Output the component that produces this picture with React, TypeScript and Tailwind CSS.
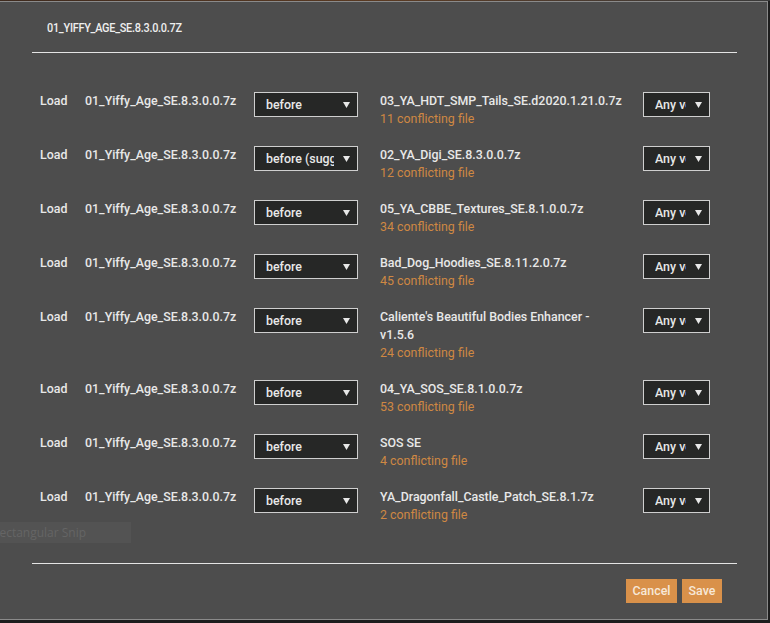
import { ReactNode } from "react";

type Row = {
  order: string;
  title: string;
  count: number;
};

const rows: Row[] = [
  { order: "before", title: "03_YA_HDT_SMP_Tails_SE.d2020.1.21.0.7z", count: 11 },
  { order: "before (suggested)", title: "02_YA_Digi_SE.8.3.0.0.7z", count: 12 },
  { order: "before", title: "05_YA_CBBE_Textures_SE.8.1.0.0.7z", count: 34 },
  { order: "before", title: "Bad_Dog_Hoodies_SE.8.11.2.0.7z", count: 45 },
  { order: "before", title: "Caliente's Beautiful Bodies Enhancer - v1.5.6", count: 24 },
  { order: "before", title: "04_YA_SOS_SE.8.1.0.0.7z", count: 53 },
  { order: "before", title: "SOS SE", count: 4 },
  { order: "before", title: "YA_Dragonfall_Castle_Patch_SE.8.1.7z", count: 2 },
];

function Caret() {
  return (
    <svg width="7" height="6" viewBox="0 0 7 6" className="shrink-0">
      <path d="M0 0 H7 L3.5 6 Z" fill="#e8e8e8" />
    </svg>
  );
}

function Select({ width, textWidth, children }: { width: string; textWidth: string; children: ReactNode }) {
  return (
    <div
      className={`${width} h-[25px] flex items-center justify-between border border-[#cfcfcf] bg-[#262726] pl-[11px] pr-[7px]`}
    >
      <span className={`${textWidth} overflow-hidden whitespace-nowrap text-[12.4px] font-medium text-[#e8e8e8]`}>
        {children}
      </span>
      <Caret />
    </div>
  );
}

export default function App() {
  return (
    <div
      className="relative w-[770px] h-[623px] overflow-hidden bg-[#1d1d1d]"
      style={{ fontFamily: "Roboto, 'Liberation Sans', sans-serif" }}
    >
      <div className="h-px bg-gradient-to-r from-[#3e2a1e] via-[#5a3a22] to-[#3a3a3a]" />
      <div className="w-[768px] h-[619px] border-t border-r border-b border-[#8a8a8a] bg-[#4d4d4d] pl-8 pr-[30px]">
        <div className="h-[51px] pt-[17px] pl-[15px] border-b border-[#e4e4e4] text-[13px] leading-[18px]">
          <span className="inline-block origin-left scale-x-[0.84] font-medium text-[#eeeeee] tracking-tight">
            01_YIFFY_AGE_SE.8.3.0.0.7Z
          </span>
        </div>

        <div className="py-[30px]">
          {rows.map((row, i) => (
            <div
              key={i}
              className="grid grid-cols-[45px_169px_126px_263px_67px] items-start py-[9px] pl-2 text-[12.4px] leading-[18px] font-medium text-[#e8e8e8]"
            >
              <div>Load</div>
              <div className="whitespace-nowrap">01_Yiffy_Age_SE.8.3.0.0.7z</div>
              <Select width="w-[104px]" textWidth="w-[68px]">
                {row.order}
              </Select>
              <div className="w-[232px]">
                <div>{row.title}</div>
                <div className="font-normal text-[#cf8843]">{row.count} conflicting file</div>
              </div>
              <Select width="w-[67px]" textWidth="w-[31px]">
                Any version
              </Select>
            </div>
          ))}
        </div>

        <div className="border-t border-[#e4e4e4] pt-[15px] pr-[15px] flex justify-end gap-[5px]">
          <button className="h-6 w-[51px] bg-[#d9914a] text-[12.4px] font-medium text-[#f7e8d8]">Cancel</button>
          <button className="h-6 w-[40px] bg-[#d9914a] text-[12.4px] font-medium text-[#f7e8d8]">Save</button>
        </div>
      </div>

      <div className="absolute left-0 top-[522px] w-[131px] h-[21px] overflow-hidden bg-[#535353] flex items-center">
        <span className="-ml-[8px] whitespace-nowrap text-[12px] text-[#656565]" style={{ fontFamily: "'Open Sans', sans-serif" }}>
          Rectangular Snip
        </span>
      </div>
    </div>
  );
}
